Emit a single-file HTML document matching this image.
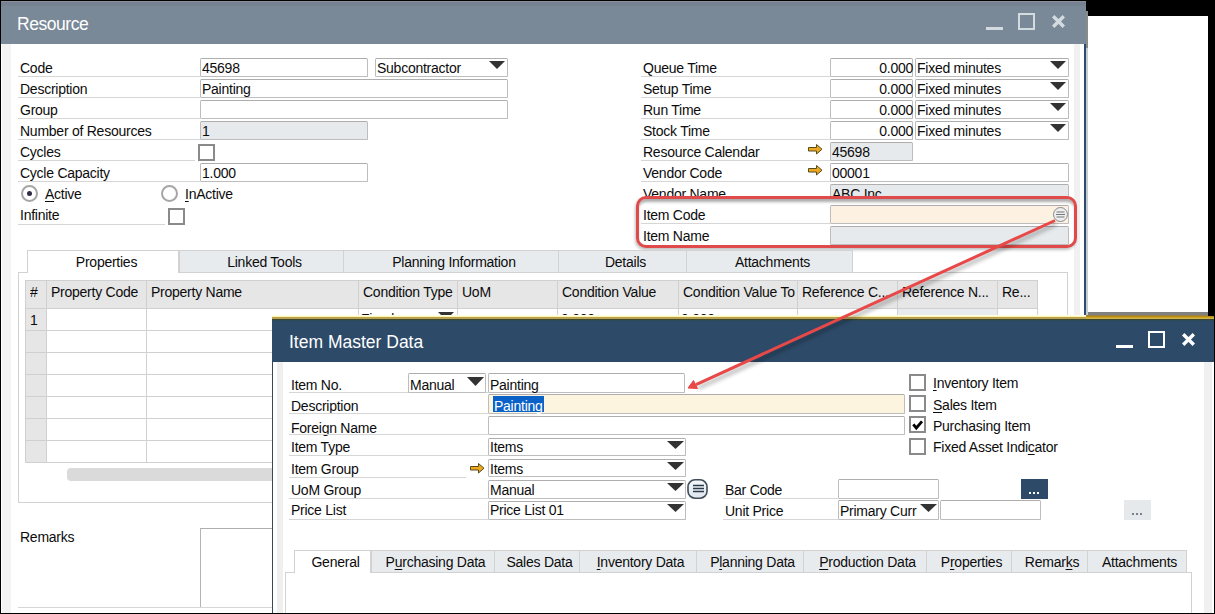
<!DOCTYPE html><html><head><meta charset="utf-8"><style>
html,body{margin:0;padding:0}
body{width:1215px;height:614px;overflow:hidden;background:#000;position:relative;font-family:"Liberation Sans",sans-serif}
.b{position:absolute;box-sizing:border-box;border:1px solid #c4c4c4}
.r{position:absolute}
.t{position:absolute;white-space:nowrap;letter-spacing:-0.25px}
u{text-decoration:underline;text-decoration-thickness:1px;text-underline-offset:1.5px}
</style></head><body>
<div class="r" style="left:1088px;top:16px;width:120px;height:296px;background:#fff;"></div>
<div class="r" style="left:1088px;top:312px;width:120px;height:4px;background:#808080;"></div>
<div class="r" style="left:1086px;top:11px;width:2px;height:37px;background:#8a8a8a;"></div>
<div class="r" style="left:1086px;top:48px;width:2px;height:268px;background:#c5ccd3;"></div>
<div class="r" style="left:1px;top:1px;width:1085px;height:43px;background:#798997;"></div>
<div class="r" style="left:1px;top:1px;width:1085px;height:1px;background:#8a9099;"></div>
<div class="r" style="left:1px;top:2px;width:1085px;height:4px;background:linear-gradient(#78808f,#758393);"></div>
<div class="t" style="left:17px;top:14.22px;font-size:17.5px;line-height:20px;color:#fff;letter-spacing:-0.45px">Resource</div>
<div class="r" style="left:986px;top:27px;width:17px;height:3px;background:#d3dae0;"></div>
<div class="b" style="left:1018px;top:13px;width:17px;height:17px;border:2px solid #d3dae0"></div>
<svg class="r" style="left:1052px;top:15px" width="13" height="13"><path d="M1.2 1.2 L11.8 11.8 M11.8 1.2 L1.2 11.8" stroke="#d3dae0" stroke-width="3.4"/></svg>
<div class="r" style="left:1px;top:44px;width:1085px;height:569px;background:#fff;"></div>
<div class="r" style="left:2px;top:44px;width:9px;height:569px;background:#f3f3f3;"></div>
<div class="r" style="left:1074px;top:44px;width:6px;height:569px;background:#f1f1f1;"></div>
<div class="r" style="left:1084px;top:44px;width:2px;height:569px;background:#2c4a6b;"></div>
<div class="t" style="left:20px;top:58.07px;font-size:14px;line-height:20px;color:#0c0c0c;">Code</div>
<div class="r" style="left:18px;top:76px;width:182px;height:1px;background:#d6d6d6;"></div>
<div class="t" style="left:20px;top:79.07px;font-size:14px;line-height:20px;color:#0c0c0c;">Description</div>
<div class="r" style="left:18px;top:97px;width:182px;height:1px;background:#d6d6d6;"></div>
<div class="t" style="left:20px;top:100.07px;font-size:14px;line-height:20px;color:#0c0c0c;">Group</div>
<div class="r" style="left:18px;top:118px;width:182px;height:1px;background:#d6d6d6;"></div>
<div class="t" style="left:20px;top:121.07px;font-size:14px;line-height:20px;color:#0c0c0c;">Number of Resources</div>
<div class="r" style="left:18px;top:139px;width:182px;height:1px;background:#d6d6d6;"></div>
<div class="t" style="left:20px;top:142.07px;font-size:14px;line-height:20px;color:#0c0c0c;">Cycles</div>
<div class="r" style="left:18px;top:160px;width:177px;height:1px;background:#d6d6d6;"></div>
<div class="t" style="left:20px;top:163.07px;font-size:14px;line-height:20px;color:#0c0c0c;">Cycle Capacity</div>
<div class="r" style="left:18px;top:181px;width:182px;height:1px;background:#d6d6d6;"></div>
<div class="b" style="left:200px;top:58px;width:168px;height:19px;background:#fff;border-color:#bdbdbd;border-radius:1.5px;border-top-color:#aeaeae;"></div>
<div class="t" style="left:202px;top:58.07px;font-size:14px;line-height:20px;color:#0c0c0c;">45698</div>
<div class="b" style="left:375px;top:58px;width:133px;height:19px;background:#fff;border-color:#bdbdbd;border-radius:1.5px;border-top-color:#aeaeae;"></div>
<div class="t" style="left:377px;top:58.07px;font-size:14px;line-height:20px;color:#0c0c0c;">Subcontractor</div>
<svg class="r" style="left:489px;top:61px" width="16" height="8"><polygon points="0,0 16,0 8.0,8" fill="#333"/></svg>
<div class="b" style="left:200px;top:79px;width:308px;height:19px;background:#fff;border-color:#bdbdbd;border-radius:1.5px;border-top-color:#aeaeae;"></div>
<div class="t" style="left:202px;top:79.07px;font-size:14px;line-height:20px;color:#0c0c0c;">Painting</div>
<div class="b" style="left:200px;top:100px;width:308px;height:19px;background:#fff;border-color:#bdbdbd;border-radius:1.5px;border-top-color:#aeaeae;"></div>
<div class="b" style="left:200px;top:121px;width:168px;height:19px;background:#e6eaed;border-color:#bdbdbd;border-radius:1.5px;border-top-color:#aeaeae;"></div>
<div class="t" style="left:202px;top:121.07px;font-size:14px;line-height:20px;color:#0c0c0c;">1</div>
<div class="b" style="left:198px;top:144px;width:17px;height:17px;border:2px solid #8a8a8a;background:#fff;box-sizing:border-box"></div>
<div class="b" style="left:200px;top:163px;width:168px;height:19px;background:#fff;border-color:#bdbdbd;border-radius:1.5px;border-top-color:#aeaeae;"></div>
<div class="t" style="left:202px;top:163.07px;font-size:14px;line-height:20px;color:#0c0c0c;">1.000</div>
<div class="b" style="left:21px;top:185px;width:17px;height:17px;border-radius:50%;border:2px solid #a6a6a6;background:#fff"></div>
<div class="r" style="left:26.8px;top:190.8px;width:5px;height:5px;border-radius:50%;background:#2f2d48"></div>
<div class="t" style="left:45px;top:184.07px;font-size:14px;line-height:20px;color:#0c0c0c;"><u>A</u>ctive</div>
<div class="b" style="left:161px;top:185px;width:17px;height:17px;border-radius:50%;border:2px solid #a6a6a6;background:#fff"></div>
<div class="t" style="left:185px;top:184.07px;font-size:14px;line-height:20px;color:#0c0c0c;"><u>I</u>nActive</div>
<div class="t" style="left:20px;top:205.07px;font-size:14px;line-height:20px;color:#0c0c0c;">Infinite</div>
<div class="r" style="left:18px;top:224px;width:147px;height:1px;background:#d6d6d6;"></div>
<div class="b" style="left:168px;top:208px;width:17px;height:17px;border:2px solid #8a8a8a;background:#fff;box-sizing:border-box"></div>
<div class="t" style="left:643px;top:58.07px;font-size:14px;line-height:20px;color:#0c0c0c;">Queue Time</div>
<div class="r" style="left:641px;top:76px;width:189px;height:1px;background:#d6d6d6;"></div>
<div class="t" style="left:643px;top:79.07px;font-size:14px;line-height:20px;color:#0c0c0c;">Setup Time</div>
<div class="r" style="left:641px;top:97px;width:189px;height:1px;background:#d6d6d6;"></div>
<div class="t" style="left:643px;top:100.07px;font-size:14px;line-height:20px;color:#0c0c0c;">Run Time</div>
<div class="r" style="left:641px;top:118px;width:189px;height:1px;background:#d6d6d6;"></div>
<div class="t" style="left:643px;top:121.07px;font-size:14px;line-height:20px;color:#0c0c0c;">Stock Time</div>
<div class="r" style="left:641px;top:139px;width:189px;height:1px;background:#d6d6d6;"></div>
<div class="t" style="left:643px;top:142.07px;font-size:14px;line-height:20px;color:#0c0c0c;">Resource Calendar</div>
<div class="r" style="left:641px;top:160px;width:189px;height:1px;background:#d6d6d6;"></div>
<div class="t" style="left:643px;top:163.07px;font-size:14px;line-height:20px;color:#0c0c0c;">Vendor Code</div>
<div class="r" style="left:641px;top:181px;width:189px;height:1px;background:#d6d6d6;"></div>
<div class="t" style="left:643px;top:184.07px;font-size:14px;line-height:20px;color:#0c0c0c;">Vendor Name</div>
<div class="b" style="left:830px;top:58px;width:83px;height:19px;background:#fff;border-color:#bdbdbd;border-radius:1.5px;border-top-color:#aeaeae;"></div>
<div class="t" style="left:833px;width:80px;text-align:right;top:58.07px;font-size:14px;line-height:20px;color:#0c0c0c;">0.000</div>
<div class="b" style="left:915px;top:58px;width:154px;height:19px;background:#fff;border-color:#bdbdbd;border-radius:1.5px;border-top-color:#aeaeae;"></div>
<div class="t" style="left:917px;top:58.07px;font-size:14px;line-height:20px;color:#0c0c0c;">Fixed minutes</div>
<svg class="r" style="left:1050px;top:61px" width="16" height="8"><polygon points="0,0 16,0 8.0,8" fill="#333"/></svg>
<div class="b" style="left:830px;top:79px;width:83px;height:19px;background:#fff;border-color:#bdbdbd;border-radius:1.5px;border-top-color:#aeaeae;"></div>
<div class="t" style="left:833px;width:80px;text-align:right;top:79.07px;font-size:14px;line-height:20px;color:#0c0c0c;">0.000</div>
<div class="b" style="left:915px;top:79px;width:154px;height:19px;background:#fff;border-color:#bdbdbd;border-radius:1.5px;border-top-color:#aeaeae;"></div>
<div class="t" style="left:917px;top:79.07px;font-size:14px;line-height:20px;color:#0c0c0c;">Fixed minutes</div>
<svg class="r" style="left:1050px;top:82px" width="16" height="8"><polygon points="0,0 16,0 8.0,8" fill="#333"/></svg>
<div class="b" style="left:830px;top:100px;width:83px;height:19px;background:#fff;border-color:#bdbdbd;border-radius:1.5px;border-top-color:#aeaeae;"></div>
<div class="t" style="left:833px;width:80px;text-align:right;top:100.07px;font-size:14px;line-height:20px;color:#0c0c0c;">0.000</div>
<div class="b" style="left:915px;top:100px;width:154px;height:19px;background:#fff;border-color:#bdbdbd;border-radius:1.5px;border-top-color:#aeaeae;"></div>
<div class="t" style="left:917px;top:100.07px;font-size:14px;line-height:20px;color:#0c0c0c;">Fixed minutes</div>
<svg class="r" style="left:1050px;top:103px" width="16" height="8"><polygon points="0,0 16,0 8.0,8" fill="#333"/></svg>
<div class="b" style="left:830px;top:121px;width:83px;height:19px;background:#fff;border-color:#bdbdbd;border-radius:1.5px;border-top-color:#aeaeae;"></div>
<div class="t" style="left:833px;width:80px;text-align:right;top:121.07px;font-size:14px;line-height:20px;color:#0c0c0c;">0.000</div>
<div class="b" style="left:915px;top:121px;width:154px;height:19px;background:#fff;border-color:#bdbdbd;border-radius:1.5px;border-top-color:#aeaeae;"></div>
<div class="t" style="left:917px;top:121.07px;font-size:14px;line-height:20px;color:#0c0c0c;">Fixed minutes</div>
<svg class="r" style="left:1050px;top:124px" width="16" height="8"><polygon points="0,0 16,0 8.0,8" fill="#333"/></svg>
<div class="b" style="left:830px;top:142px;width:83px;height:19px;background:#e6eaed;border-color:#bdbdbd;border-radius:1.5px;border-top-color:#aeaeae;"></div>
<div class="t" style="left:832px;top:142.07px;font-size:14px;line-height:20px;color:#0c0c0c;">45698</div>
<svg class="r" style="left:808px;top:144px" width="15" height="11"><path d="M0.5 3.5 H8.5 V0.5 L14 5.2 L8.5 10 V7 H0.5 Z" fill="#eaa921" stroke="#5d4a1c" stroke-width="1"/></svg>
<div class="b" style="left:830px;top:163px;width:239px;height:19px;background:#fff;border-color:#bdbdbd;border-radius:1.5px;border-top-color:#aeaeae;"></div>
<div class="t" style="left:832px;top:163.07px;font-size:14px;line-height:20px;color:#0c0c0c;">00001</div>
<svg class="r" style="left:808px;top:165px" width="15" height="11"><path d="M0.5 3.5 H8.5 V0.5 L14 5.2 L8.5 10 V7 H0.5 Z" fill="#eaa921" stroke="#5d4a1c" stroke-width="1"/></svg>
<div class="b" style="left:830px;top:184px;width:239px;height:19px;background:#e6eaed;border-color:#bdbdbd;border-radius:1.5px;border-top-color:#aeaeae;"></div>
<div class="t" style="left:832px;top:184.07px;font-size:14px;line-height:20px;color:#0c0c0c;">ABC Inc</div>
<div class="r" style="left:636px;top:196px;width:441px;height:52px;box-sizing:border-box;border:3px solid #e04a4a;border-radius:10px;background:#fff;box-shadow:-1px 2px 3px rgba(0,0,0,0.25), inset 0 4px 3px -1px rgba(0,0,0,0.33)"></div>
<div class="t" style="left:643px;top:205.07px;font-size:14px;line-height:20px;color:#0c0c0c;">Item Code</div>
<div class="r" style="left:641px;top:223px;width:189px;height:1px;background:#d6d6d6;"></div>
<div class="t" style="left:643px;top:226.07px;font-size:14px;line-height:20px;color:#0c0c0c;">Item Name</div>
<div class="b" style="left:830px;top:205px;width:239px;height:19px;background:#fdf1e2;border-color:#bdbdbd;border-radius:1.5px;border-top-color:#aeaeae;"></div>
<div class="b" style="left:830px;top:226px;width:239px;height:19px;background:#e6eaed;border-color:#bdbdbd;border-radius:1.5px;border-top-color:#aeaeae;"></div>
<svg class="r" style="left:1052px;top:206px" width="17" height="17"><circle cx="8.5" cy="8.5" r="7" fill="#eceef0" stroke="#8a8a8a" stroke-width="1"/><path d="M4.5 6 H12.5 M4 8.5 H13 M4.5 11 H12.5" stroke="#777" stroke-width="1.2"/></svg>
<div class="b" style="left:18px;top:272px;width:1050px;height:231px;border-color:#d2d2d2;background:#fff"></div>
<div class="b" style="left:27px;top:250px;width:152px;height:23px;border-color:#d2d2d2;border-bottom:none;background:#fff"></div>
<div class="t" style="left:30.5px;width:152px;text-align:center;top:251.87px;font-size:14px;line-height:20px;color:#0c0c0c;">Properties</div>
<div class="b" style="left:179px;top:250px;width:165px;height:23px;border-color:#d2d2d2;background:#e8ebee"></div>
<div class="t" style="left:182.5px;width:164px;text-align:center;top:251.87px;font-size:14px;line-height:20px;color:#0c0c0c;">Linked Tools</div>
<div class="b" style="left:343px;top:250px;width:216px;height:23px;border-color:#d2d2d2;background:#e8ebee"></div>
<div class="t" style="left:346.5px;width:215px;text-align:center;top:251.87px;font-size:14px;line-height:20px;color:#0c0c0c;">Planning Information</div>
<div class="b" style="left:558px;top:250px;width:129px;height:23px;border-color:#d2d2d2;background:#e8ebee"></div>
<div class="t" style="left:561.5px;width:128px;text-align:center;top:251.87px;font-size:14px;line-height:20px;color:#0c0c0c;">Details</div>
<div class="b" style="left:686px;top:250px;width:167px;height:23px;border-color:#d2d2d2;background:#e8ebee"></div>
<div class="t" style="left:689.5px;width:166px;text-align:center;top:251.87px;font-size:14px;line-height:20px;color:#0c0c0c;">Attachments</div>
<div class="r" style="left:25px;top:280px;width:1012px;height:28px;background:#e6e6e6;"></div>
<div class="r" style="left:25px;top:308px;width:21px;height:22px;background:#e6e6e6;"></div>
<div class="r" style="left:897px;top:308px;width:100px;height:22px;background:#e9ecef;"></div>
<div class="r" style="left:25px;top:330px;width:21px;height:22px;background:#e6e6e6;"></div>
<div class="r" style="left:897px;top:330px;width:100px;height:22px;background:#e9ecef;"></div>
<div class="r" style="left:25px;top:352px;width:21px;height:22px;background:#e6e6e6;"></div>
<div class="r" style="left:897px;top:352px;width:100px;height:22px;background:#e9ecef;"></div>
<div class="r" style="left:25px;top:374px;width:21px;height:22px;background:#e6e6e6;"></div>
<div class="r" style="left:897px;top:374px;width:100px;height:22px;background:#e9ecef;"></div>
<div class="r" style="left:25px;top:396px;width:21px;height:22px;background:#e6e6e6;"></div>
<div class="r" style="left:897px;top:396px;width:100px;height:22px;background:#e9ecef;"></div>
<div class="r" style="left:25px;top:418px;width:21px;height:22px;background:#e6e6e6;"></div>
<div class="r" style="left:897px;top:418px;width:100px;height:22px;background:#e9ecef;"></div>
<div class="r" style="left:25px;top:440px;width:21px;height:22px;background:#e6e6e6;"></div>
<div class="r" style="left:897px;top:440px;width:100px;height:22px;background:#e9ecef;"></div>
<div class="r" style="left:25px;top:308px;width:1013px;height:1px;background:#d0d0d0;"></div>
<div class="r" style="left:25px;top:330px;width:1013px;height:1px;background:#d0d0d0;"></div>
<div class="r" style="left:25px;top:352px;width:1013px;height:1px;background:#d0d0d0;"></div>
<div class="r" style="left:25px;top:374px;width:1013px;height:1px;background:#d0d0d0;"></div>
<div class="r" style="left:25px;top:396px;width:1013px;height:1px;background:#d0d0d0;"></div>
<div class="r" style="left:25px;top:418px;width:1013px;height:1px;background:#d0d0d0;"></div>
<div class="r" style="left:25px;top:440px;width:1013px;height:1px;background:#d0d0d0;"></div>
<div class="r" style="left:25px;top:462px;width:1013px;height:1px;background:#d0d0d0;"></div>
<div class="r" style="left:25px;top:280px;width:1013px;height:1px;background:#d0d0d0;"></div>
<div class="r" style="left:25px;top:280px;width:1px;height:182px;background:#d0d0d0;"></div>
<div class="r" style="left:46px;top:280px;width:1px;height:182px;background:#d0d0d0;"></div>
<div class="r" style="left:146px;top:280px;width:1px;height:182px;background:#d0d0d0;"></div>
<div class="r" style="left:358px;top:280px;width:1px;height:182px;background:#d0d0d0;"></div>
<div class="r" style="left:457px;top:280px;width:1px;height:182px;background:#d0d0d0;"></div>
<div class="r" style="left:557px;top:280px;width:1px;height:182px;background:#d0d0d0;"></div>
<div class="r" style="left:678px;top:280px;width:1px;height:182px;background:#d0d0d0;"></div>
<div class="r" style="left:797px;top:280px;width:1px;height:182px;background:#d0d0d0;"></div>
<div class="r" style="left:897px;top:280px;width:1px;height:182px;background:#d0d0d0;"></div>
<div class="r" style="left:997px;top:280px;width:1px;height:182px;background:#d0d0d0;"></div>
<div class="r" style="left:1037px;top:280px;width:1px;height:182px;background:#d0d0d0;"></div>
<div class="t" style="left:30px;top:282.00px;width:17px;overflow:hidden;font-size:14px;line-height:20px;color:#0c0c0c">#</div>
<div class="t" style="left:51px;top:282.00px;width:96px;overflow:hidden;font-size:14px;line-height:20px;color:#0c0c0c">Property Code</div>
<div class="t" style="left:151px;top:282.00px;width:208px;overflow:hidden;font-size:14px;line-height:20px;color:#0c0c0c">Property Name</div>
<div class="t" style="left:363px;top:282.00px;width:95px;overflow:hidden;font-size:14px;line-height:20px;color:#0c0c0c">Condition Type</div>
<div class="t" style="left:462px;top:282.00px;width:96px;overflow:hidden;font-size:14px;line-height:20px;color:#0c0c0c">UoM</div>
<div class="t" style="left:562px;top:282.00px;width:117px;overflow:hidden;font-size:14px;line-height:20px;color:#0c0c0c">Condition Value</div>
<div class="t" style="left:683px;top:282.00px;width:115px;overflow:hidden;font-size:14px;line-height:20px;color:#0c0c0c">Condition Value To</div>
<div class="t" style="left:802px;top:282.00px;width:96px;overflow:hidden;font-size:14px;line-height:20px;color:#0c0c0c">Reference C...</div>
<div class="t" style="left:902px;top:282.00px;width:96px;overflow:hidden;font-size:14px;line-height:20px;color:#0c0c0c">Reference N...</div>
<div class="t" style="left:1002px;top:282.00px;width:36px;overflow:hidden;font-size:14px;line-height:20px;color:#0c0c0c">Re...</div>
<div class="t" style="left:30px;top:310.07px;font-size:14px;line-height:20px;color:#0c0c0c;">1</div>
<div class="t" style="left:361px;top:309.37px;font-size:14px;line-height:20px;color:#0c0c0c;">Fixed</div>
<svg class="r" style="left:438px;top:312px" width="16" height="8"><polygon points="0,0 16,0 8.0,8" fill="#333"/></svg>
<div class="t" style="left:561px;top:309.37px;font-size:14px;line-height:20px;color:#0c0c0c;">0.000</div>
<div class="t" style="left:681px;top:309.37px;font-size:14px;line-height:20px;color:#0c0c0c;">0.000</div>
<div class="r" style="left:67px;top:468px;width:210px;height:13px;background:#dadada;border-radius:4px"></div>
<div class="t" style="left:20px;top:526.87px;font-size:14px;line-height:20px;color:#0c0c0c;">Remarks</div>
<div class="b" style="left:200px;top:528px;width:80px;height:80px;background:#fff;border-color:#b4b4b4;border-radius:0px;border-top-color:#aeaeae;"></div>
<div class="r" style="left:18px;top:607px;width:254px;height:1px;background:#d6d6d6;"></div>
<div class="r" style="left:272px;top:316px;width:942px;height:298px;background:#fff;"></div>
<div class="r" style="left:272px;top:315px;width:814px;height:1px;background:#fffde6;"></div>
<div class="r" style="left:272px;top:316px;width:814px;height:1px;background:#fcf6b4;"></div>
<div class="r" style="left:272px;top:317px;width:814px;height:1px;background:#bba048;"></div>
<div class="r" style="left:272px;top:318px;width:814px;height:1px;background:#b3a25c;"></div>
<div class="r" style="left:1086px;top:315px;width:122px;height:1px;background:#9a8444;"></div>
<div class="r" style="left:1086px;top:316px;width:128px;height:1px;background:#b88a12;"></div>
<div class="r" style="left:1086px;top:317px;width:128px;height:1px;background:#d2a222;"></div>
<div class="r" style="left:1086px;top:318px;width:128px;height:1px;background:#c9b052;"></div>
<div class="r" style="left:272px;top:319px;width:942px;height:1px;background:#3e4626;"></div>
<div class="r" style="left:272px;top:320px;width:942px;height:1px;background:#2e4a58;"></div>
<div class="r" style="left:272px;top:321px;width:942px;height:41px;background:#2d4b69;"></div>
<div class="r" style="left:272px;top:362px;width:1px;height:252px;background:#34495c;"></div>
<div class="t" style="left:289px;top:331.82px;font-size:17.5px;line-height:20px;color:#fff;letter-spacing:0px">Item Master Data</div>
<div class="r" style="left:1116px;top:345px;width:17px;height:3px;background:#fff;"></div>
<div class="b" style="left:1148px;top:331px;width:17px;height:17px;border:2.4px solid #fff"></div>
<svg class="r" style="left:1182px;top:333px" width="13" height="13"><path d="M1.2 1.2 L11.8 11.8 M11.8 1.2 L1.2 11.8" stroke="#fff" stroke-width="3.4"/></svg>
<div class="r" style="left:277px;top:362px;width:6px;height:252px;background:#efefef;"></div>
<div class="r" style="left:1204px;top:362px;width:8px;height:252px;background:#f0f0f0;"></div>
<div class="t" style="left:291px;top:375.27px;font-size:14px;line-height:20px;color:#0c0c0c;">Item No.</div>
<div class="r" style="left:289px;top:392px;width:199px;height:1px;background:#d6d6d6;"></div>
<div class="t" style="left:291px;top:396.07px;font-size:14px;line-height:20px;color:#0c0c0c;">Description</div>
<div class="r" style="left:289px;top:413px;width:199px;height:1px;background:#d6d6d6;"></div>
<div class="t" style="left:291px;top:418.27px;font-size:14px;line-height:20px;color:#0c0c0c;">Foreign Name</div>
<div class="r" style="left:289px;top:434px;width:199px;height:1px;background:#d6d6d6;"></div>
<div class="t" style="left:291px;top:437.07px;font-size:14px;line-height:20px;color:#0c0c0c;">Item Type</div>
<div class="r" style="left:289px;top:455px;width:199px;height:1px;background:#d6d6d6;"></div>
<div class="t" style="left:291px;top:458.87px;font-size:14px;line-height:20px;color:#0c0c0c;">Item Group</div>
<div class="r" style="left:289px;top:477px;width:177px;height:1px;background:#d6d6d6;"></div>
<div class="t" style="left:291px;top:479.67px;font-size:14px;line-height:20px;color:#0c0c0c;">UoM Group</div>
<div class="r" style="left:289px;top:498px;width:199px;height:1px;background:#d6d6d6;"></div>
<div class="t" style="left:291px;top:500.47px;font-size:14px;line-height:20px;color:#0c0c0c;">Price List</div>
<div class="r" style="left:289px;top:519px;width:199px;height:1px;background:#d6d6d6;"></div>
<div class="b" style="left:408px;top:373px;width:78px;height:20px;background:#fff;border-color:#bdbdbd;border-radius:1.5px;border-top-color:#aeaeae;"></div>
<div class="t" style="left:410px;top:375.27px;font-size:14px;line-height:20px;color:#0c0c0c;">Manual</div>
<svg class="r" style="left:467px;top:377px" width="17" height="9"><polygon points="0,0 17,0 8.5,9" fill="#333"/></svg>
<div class="b" style="left:488px;top:373px;width:197px;height:20px;background:#fff;border-color:#bdbdbd;border-radius:1.5px;border-top-color:#aeaeae;"></div>
<div class="t" style="left:490px;top:375.27px;font-size:14px;line-height:20px;color:#0c0c0c;">Painting</div>
<div class="b" style="left:488px;top:394px;width:417px;height:20px;background:#fdf4e0;border-color:#bdbdbd;border-radius:1.5px;border-top-color:#aeaeae;"></div>
<div class="r" style="left:493px;top:396px;width:51px;height:16px;background:#0a62c9;"></div>
<div class="t" style="left:494px;top:396.07px;font-size:14px;line-height:20px;color:#fff;">Painting</div>
<div class="b" style="left:488px;top:416px;width:417px;height:19px;background:#fff;border-color:#bdbdbd;border-radius:1.5px;border-top-color:#aeaeae;"></div>
<div class="b" style="left:488px;top:438px;width:198px;height:18px;background:#fff;border-color:#bdbdbd;border-radius:1.5px;border-top-color:#aeaeae;"></div>
<div class="t" style="left:490px;top:437.07px;font-size:14px;line-height:20px;color:#0c0c0c;">Items</div>
<svg class="r" style="left:667px;top:441px" width="17" height="8"><polygon points="0,0 17,0 8.5,8" fill="#333"/></svg>
<svg class="r" style="left:470px;top:463px" width="15" height="11"><path d="M0.5 3.5 H8.5 V0.5 L14 5.2 L8.5 10 V7 H0.5 Z" fill="#eaa921" stroke="#5d4a1c" stroke-width="1"/></svg>
<div class="b" style="left:488px;top:459px;width:198px;height:18px;background:#fff;border-color:#bdbdbd;border-radius:1.5px;border-top-color:#aeaeae;"></div>
<div class="t" style="left:490px;top:458.87px;font-size:14px;line-height:20px;color:#0c0c0c;">Items</div>
<svg class="r" style="left:667px;top:462px" width="17" height="8"><polygon points="0,0 17,0 8.5,8" fill="#333"/></svg>
<div class="b" style="left:488px;top:480px;width:198px;height:19px;background:#fff;border-color:#bdbdbd;border-radius:1.5px;border-top-color:#aeaeae;"></div>
<div class="t" style="left:490px;top:479.67px;font-size:14px;line-height:20px;color:#0c0c0c;">Manual</div>
<svg class="r" style="left:667px;top:483px" width="17" height="8"><polygon points="0,0 17,0 8.5,8" fill="#333"/></svg>
<div class="b" style="left:488px;top:501px;width:198px;height:19px;background:#fff;border-color:#bdbdbd;border-radius:1.5px;border-top-color:#aeaeae;"></div>
<div class="t" style="left:490px;top:500.47px;font-size:14px;line-height:20px;color:#0c0c0c;">Price List 01</div>
<svg class="r" style="left:667px;top:504px" width="17" height="8"><polygon points="0,0 17,0 8.5,8" fill="#333"/></svg>
<svg class="r" style="left:687px;top:479px" width="21" height="20"><defs><linearGradient id="ug" x1="0" y1="0" x2="0" y2="1"><stop offset="0" stop-color="#f4f8fc"/><stop offset="1" stop-color="#dfe5ec"/></linearGradient></defs><rect x="1" y="0.8" width="19" height="18.4" rx="7" fill="url(#ug)" stroke="#3e4c5a" stroke-width="1.6"/><path d="M6 11.5 H17 M6 14.5 H17 M6 17.6 H17" transform="translate(0,-5)" stroke="#2a3a4a" stroke-width="1.5"/></svg>
<div class="b" style="left:909px;top:374px;width:17px;height:17px;border:2px solid #8a8a8a;background:#fff;box-sizing:border-box"></div>
<div class="t" style="left:933px;top:373.17px;font-size:14px;line-height:20px;color:#0c0c0c;"><u>I</u>nventory Item</div>
<div class="b" style="left:909px;top:395px;width:17px;height:17px;border:2px solid #8a8a8a;background:#fff;box-sizing:border-box"></div>
<div class="t" style="left:933px;top:394.67px;font-size:14px;line-height:20px;color:#0c0c0c;"><u>S</u>ales Item</div>
<div class="b" style="left:909px;top:416px;width:17px;height:17px;border:2px solid #8a8a8a;background:#fff;box-sizing:border-box"></div>
<svg class="r" style="left:909px;top:416px" width="16" height="16"><path d="M4.3 8.4 L7.3 12 L13 5.4" stroke="#000" stroke-width="2.8" fill="none"/></svg>
<div class="t" style="left:933px;top:415.87px;font-size:14px;line-height:20px;color:#0c0c0c;">Purchasing Item</div>
<div class="b" style="left:909px;top:438px;width:17px;height:17px;border:2px solid #8a8a8a;background:#fff;box-sizing:border-box"></div>
<div class="t" style="left:933px;top:436.67px;font-size:14px;line-height:20px;color:#0c0c0c;">Fixed Asset Indi<u>c</u>ator</div>
<div class="t" style="left:725px;top:479.87px;font-size:14px;line-height:20px;color:#0c0c0c;">Bar Code</div>
<div class="r" style="left:723px;top:498px;width:115px;height:1px;background:#d6d6d6;"></div>
<div class="b" style="left:838px;top:479px;width:101px;height:20px;background:#fff;border-color:#bdbdbd;border-radius:1.5px;border-top-color:#aeaeae;"></div>
<div class="r" style="left:1021px;top:479px;width:27px;height:20px;background:#2d4b69;"></div>
<div class="r" style="left:1029px;top:492px;width:2px;height:2px;background:#fff;"></div>
<div class="r" style="left:1033px;top:492px;width:2px;height:2px;background:#fff;"></div>
<div class="r" style="left:1037px;top:492px;width:2px;height:2px;background:#fff;"></div>
<div class="t" style="left:725px;top:500.57px;font-size:14px;line-height:20px;color:#0c0c0c;">Unit Price</div>
<div class="r" style="left:723px;top:519px;width:115px;height:1px;background:#d6d6d6;"></div>
<div class="b" style="left:838px;top:500px;width:101px;height:20px;background:#fff;border-color:#bdbdbd;border-radius:1.5px;border-top-color:#aeaeae;"></div>
<div class="t" style="left:840px;top:500.57px;font-size:14px;line-height:20px;color:#0c0c0c;">Primary Curr</div>
<svg class="r" style="left:920px;top:504px" width="17" height="8"><polygon points="0,0 17,0 8.5,8" fill="#333"/></svg>
<div class="b" style="left:940px;top:500px;width:101px;height:20px;background:#fff;border-color:#bdbdbd;border-radius:1.5px;border-top-color:#aeaeae;"></div>
<div class="r" style="left:1124px;top:500px;width:27px;height:20px;background:#e6e9ec;"></div>
<div class="r" style="left:1132px;top:513px;width:2px;height:2px;background:#7a808c;"></div>
<div class="r" style="left:1136px;top:513px;width:2px;height:2px;background:#7a808c;"></div>
<div class="r" style="left:1140px;top:513px;width:2px;height:2px;background:#7a808c;"></div>
<div class="b" style="left:285px;top:572px;width:907px;height:60px;border-color:#d2d2d2;background:#fff"></div>
<div class="b" style="left:294px;top:550px;width:77px;height:23px;border-color:#d2d2d2;border-bottom:none;background:#fff"></div>
<div class="t" style="left:297.0px;width:77px;text-align:center;top:552.37px;font-size:14px;line-height:20px;color:#0c0c0c;">General</div>
<div class="b" style="left:371px;top:550px;width:124px;height:23px;border-color:#d2d2d2;background:#e8ebee"></div>
<div class="t" style="left:374.0px;width:123px;text-align:center;top:552.37px;font-size:14px;line-height:20px;color:#0c0c0c;">P<u>u</u>rchasing Data</div>
<div class="b" style="left:494px;top:550px;width:86px;height:23px;border-color:#d2d2d2;background:#e8ebee"></div>
<div class="t" style="left:497.0px;width:85px;text-align:center;top:552.37px;font-size:14px;line-height:20px;color:#0c0c0c;">Sales Data</div>
<div class="b" style="left:579px;top:550px;width:118px;height:23px;border-color:#d2d2d2;background:#e8ebee"></div>
<div class="t" style="left:582.0px;width:117px;text-align:center;top:552.37px;font-size:14px;line-height:20px;color:#0c0c0c;"><u>I</u>nventory Data</div>
<div class="b" style="left:696px;top:550px;width:108px;height:23px;border-color:#d2d2d2;background:#e8ebee"></div>
<div class="t" style="left:699.0px;width:107px;text-align:center;top:552.37px;font-size:14px;line-height:20px;color:#0c0c0c;">P<u>l</u>anning Data</div>
<div class="b" style="left:803px;top:550px;width:124px;height:23px;border-color:#d2d2d2;background:#e8ebee"></div>
<div class="t" style="left:806.0px;width:123px;text-align:center;top:552.37px;font-size:14px;line-height:20px;color:#0c0c0c;"><u>P</u>roduction Data</div>
<div class="b" style="left:926px;top:550px;width:86px;height:23px;border-color:#d2d2d2;background:#e8ebee"></div>
<div class="t" style="left:929.0px;width:85px;text-align:center;top:552.37px;font-size:14px;line-height:20px;color:#0c0c0c;">P<u>r</u>operties</div>
<div class="b" style="left:1011px;top:550px;width:77px;height:23px;border-color:#d2d2d2;background:#e8ebee"></div>
<div class="t" style="left:1014.0px;width:76px;text-align:center;top:552.37px;font-size:14px;line-height:20px;color:#0c0c0c;">Remar<u>k</u>s</div>
<div class="b" style="left:1087px;top:550px;width:100px;height:23px;border-color:#d2d2d2;background:#e8ebee"></div>
<div class="t" style="left:1090.0px;width:99px;text-align:center;top:552.37px;font-size:14px;line-height:20px;color:#0c0c0c;">Attachments</div>
<div class="r" style="left:0px;top:613px;width:1215px;height:1px;background:#000;"></div>
<svg class="r" style="left:0;top:0;overflow:visible" width="1215" height="614"><defs><filter id="sh" x="-10%" y="-10%" width="120%" height="120%"><feGaussianBlur stdDeviation="2"/></filter></defs><g opacity="0.35" filter="url(#sh)" transform="translate(1,3)"><line x1="1055" y1="221" x2="697" y2="385" stroke="#000" stroke-width="3"/></g><line x1="1055" y1="220.5" x2="696" y2="384.6" stroke="#e84848" stroke-width="3"/><polygon points="688,388 693.5,380.5 697.5,388.5" fill="#e84848" stroke="#e84848" stroke-width="1" stroke-linejoin="round"/></svg>
</body></html>
